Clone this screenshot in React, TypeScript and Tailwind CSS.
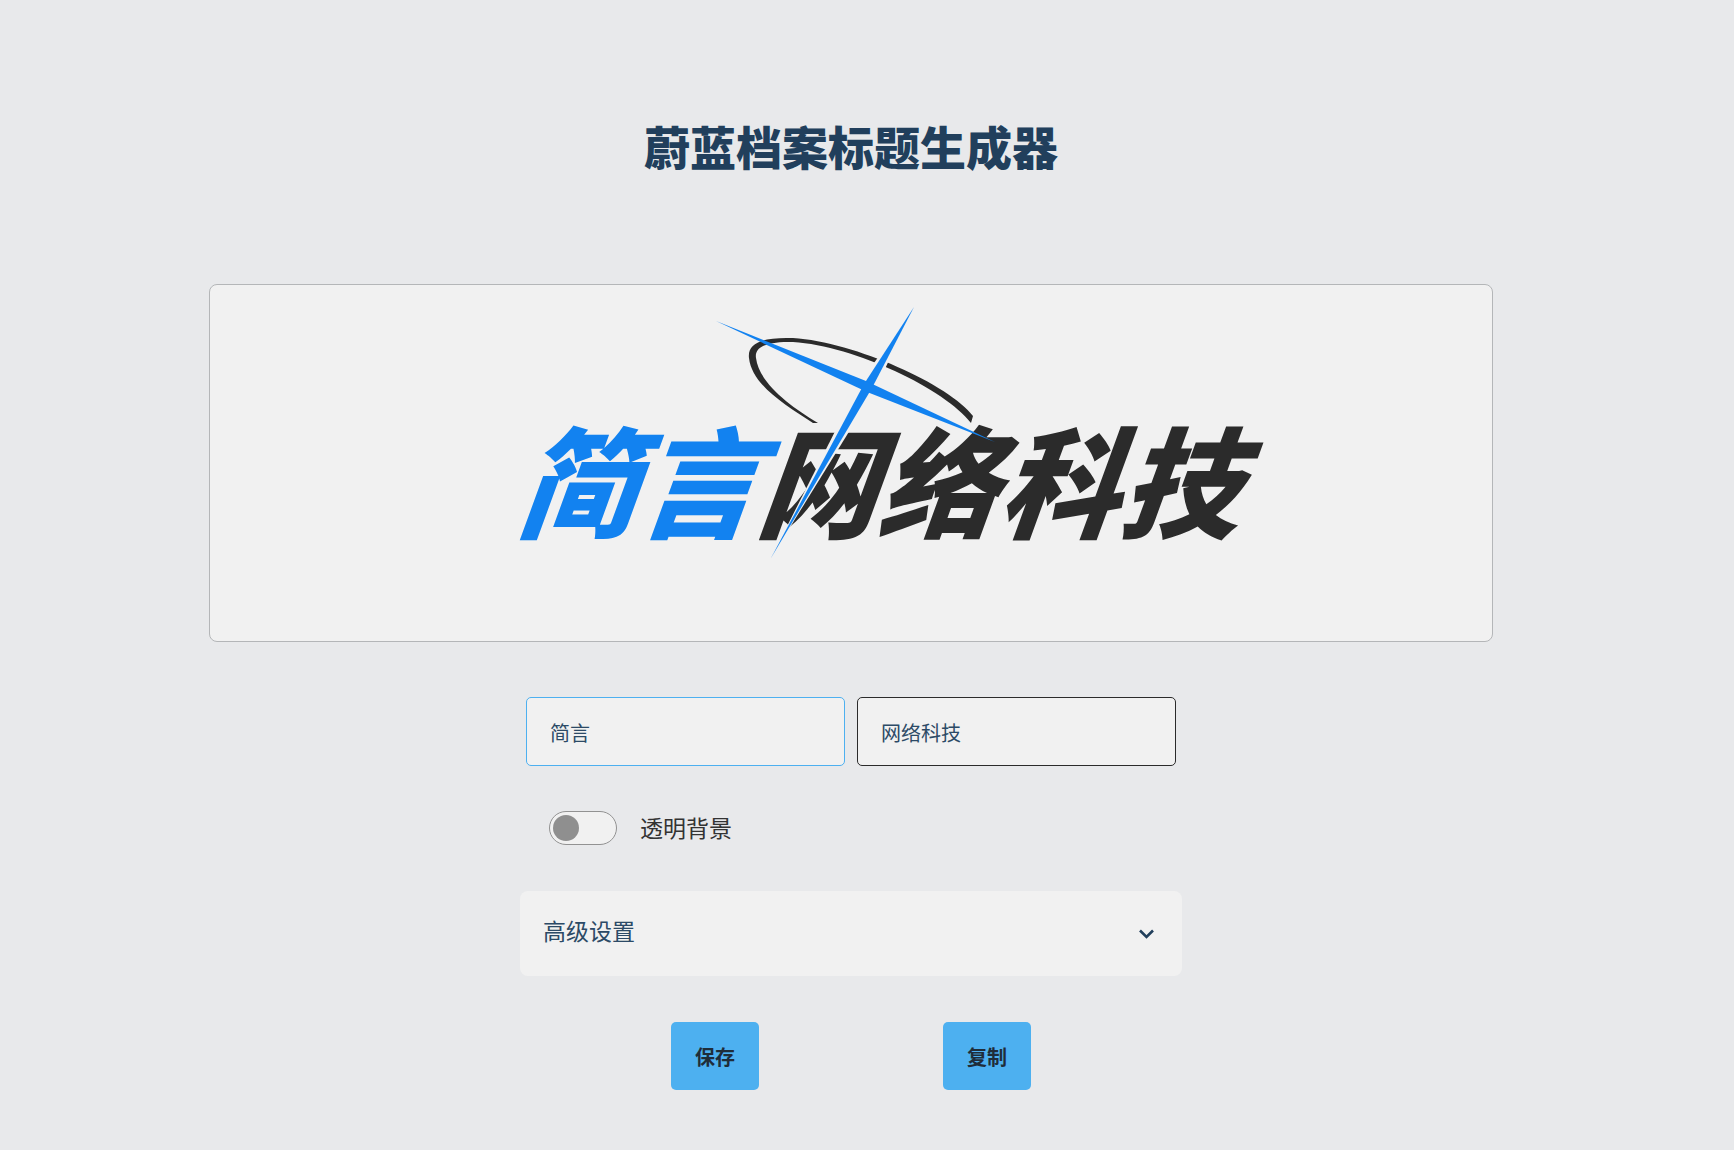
import React from 'react';

const cjk = { fontFamily: '"Noto Sans CJK SC", "Noto Sans", sans-serif' };

// Drawn logo: skewed text, halo and the two crossing rays. The viewBox uses page pixels.
const Logo: React.FC = () => (
  <svg viewBox="210 300 1282 270" className="w-[1282px] h-[270px]">
    <path
      d="M813 423 C785 405 752 385 749 358 C747 342 765 337 793 338 C855 342 950 385 973 416 L971 423 C945 389 855 346 793 342 C770 341 754 346 756 358 C759 383 790 406 818 423 Z"
      fill="#2b2b2b"
    />
    <g style={{ fontFamily: '"Noto Sans CJK SC", sans-serif', fontWeight: 900, fontSize: 120 }}>
      <text x="513" y="529" fill="#1282f0" transform="translate(194 0) skewX(-20)">
        简言
      </text>
      <text x="753" y="529" fill="#2b2b2b" letterSpacing="1" transform="translate(194 0) skewX(-20)">
        网络科技
      </text>
    </g>
    <polygon points="914,307 876,388 771,558 859,384" fill="#f1f1f1" />
    <polygon points="914,307 872,388 771,558 864,384" fill="#1282f0" />
    <polygon points="716,321 866,381 995,442 867,392" fill="#1282f0" />
  </svg>
);

const App: React.FC = () => {
  return (
    <div className="min-h-screen bg-[#e8e9eb]" style={cjk}>
      <div className="w-[1702px] flex flex-col items-center pt-[113px]">
        <h1 className="text-[46px] leading-[64px] font-black text-[#213f5c]">蔚蓝档案标题生成器</h1>

        <div className="mt-[107px] w-[1284px] h-[358px] bg-[#f1f1f1] border border-[#b4b6b8] rounded-lg flex items-start justify-center pt-[15px]">
          <Logo />
        </div>

        <div className="mt-[55px] w-[662px] flex flex-col">
          <div className="flex justify-center gap-3">
            <input
              readOnly
              value="简言"
              className="w-[319px] h-[69px] px-[23px] pt-[2px] text-xl text-[#2c4a66] bg-[#f1f1f1] border border-[#4db0f0] rounded-[5px] outline-none"
            />
            <input
              readOnly
              value="网络科技"
              className="w-[319px] h-[69px] px-[23px] pt-[2px] text-xl text-[#2c4a66] bg-[#f1f1f1] border border-[#2b2b2b] rounded-[5px] outline-none"
            />
          </div>

          <div className="mt-[45px] pl-[29px] flex items-center gap-[23px]">
            <div className="w-[68px] h-[34px] bg-[#f1f1f1] border border-[#929292] rounded-full flex items-center pl-[3px]">
              <div className="w-[26px] h-[26px] bg-[#8f8f8f] rounded-full" />
            </div>
            <span className="text-[23px] text-[#333333] -mt-[2px]">透明背景</span>
          </div>

          <div className="mt-[46px] h-[85px] bg-[#f1f1f1] rounded-lg flex items-center justify-between pl-[23px] pr-[28px]">
            <span className="text-[23px] text-[#2c4a66] -mt-[6px]">高级设置</span>
            <svg viewBox="0 0 15 10" className="w-[15px] h-[10px]" fill="none" stroke="#213f5c" strokeWidth="2.6">
              <path d="M1 1.5 L7.5 8 L14 1.5" />
            </svg>
          </div>

          <div className="mt-[46px] flex justify-center gap-[184px]">
            <button className="w-[88px] h-[68px] pt-[1px] bg-[#4db0f0] rounded-[5px] text-xl font-bold text-[#1f2d3a]">保存</button>
            <button className="w-[88px] h-[68px] pt-[1px] bg-[#4db0f0] rounded-[5px] text-xl font-bold text-[#1f2d3a]">复制</button>
          </div>
        </div>
      </div>
    </div>
  );
};

export default App;
